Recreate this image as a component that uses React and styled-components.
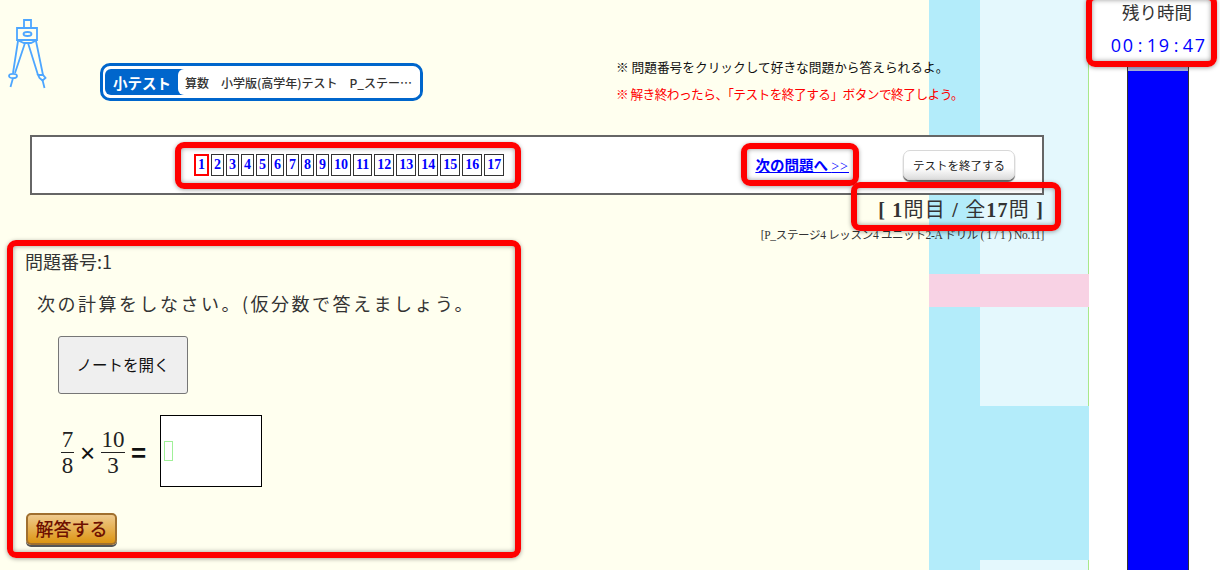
import React from "react";
import styled, { createGlobalStyle } from "styled-components";

const GOTHIC = `"Noto Sans CJK JP", "Liberation Sans", sans-serif`;
const SERIF = `"Liberation Serif", "Noto Sans CJK JP", serif`;

const Global = createGlobalStyle`
  html, body { margin: 0; padding: 0; background: #fff; }
`;

const Page = styled.div`
  display: grid;
  grid-template-columns: 1089px 131px;
  width: 1220px;
  height: 570px;
  overflow: hidden;
  position: relative;
`;

// 背景の帯は全部グラデーションで描く
const Main = styled.main`
  height: 570px;
  background-color: #ffffef;
  background-image:
    linear-gradient(#f8d2e4, #f8d2e4),
    linear-gradient(#b3ecfa, #b3ecfa),
    linear-gradient(#b3ecfa, #b3ecfa),
    linear-gradient(#a8e88a, #a8e88a),
    linear-gradient(#e4f8fd, #e4f8fd);
  background-repeat: no-repeat;
  background-size: 160px 33px, 51px 570px, 109px 154px, 1px 570px, 109px 570px;
  background-position: 929px 274px, 929px 0, 980px 406px, 1088px 0, 980px 0;
`;

const Header = styled.header`
  display: flex;
  height: 135px;
`;

const Compass = styled.svg`
  width: 40px;
  height: 72px;
  margin: 18px 0 0 8px;
  flex: none;
`;

const Badge = styled.div`
  display: flex;
  align-items: stretch;
  width: 317px;
  height: 32px;
  margin: 63px 0 0 52px;
  border: 3px solid #0066cc;
  border-radius: 10px;
  background: #fff;
  overflow: hidden;
`;

const BadgeLabel = styled.div`
  display: flex;
  align-items: center;
  box-sizing: border-box;
  flex: none;
  width: 79px;
  margin: 3px 0 3px 2px;
  padding-left: 8px;
  border-radius: 6px 0 0 6px;
  background: #0066cc;
  color: #fff;
  font: 700 14.5px ${GOTHIC};
`;

const BadgeText = styled.div`
  display: flex;
  align-items: center;
  flex: 1;
  min-width: 0;
  margin: 3px 0 3px -6px;
  padding-left: 7px;
  border-radius: 6px 0 0 6px;
  background: #fff;
  white-space: nowrap;
  color: #333;
  font: 500 12px ${GOTHIC};
`;

const Notes = styled.div`
  margin: 58px 0 0 193px;
  white-space: nowrap;
`;

const Note = styled.p`
  margin: 0 0 9px;
  height: 18px;
  color: ${(p) => (p.$alert ? "#ff0000" : "#111")};
  letter-spacing: ${(p) => (p.$alert ? "-0.55px" : "0")};
  font: 400 12.7px/18px ${GOTHIC};
`;

const NavPanel = styled.nav`
  display: flex;
  align-items: center;
  box-sizing: border-box;
  width: 1014px;
  height: 60px;
  margin-left: 30px;
  padding: 0 27px 0 162px;
  border: 2px solid #666;
  background: #fff;
`;

const Numbers = styled.ol`
  display: flex;
  align-items: center;
  gap: 2px;
  margin: 0;
  padding: 0;
  list-style: none;
`;

const NumberBox = styled.li`
  box-sizing: border-box;
  min-width: 13px;
  height: 22px;
  padding: 0 ${(p) => (p.$current || p.$wide ? 2 : 1)}px;
  border: ${(p) => (p.$current ? "2px solid #f00" : "1px solid #333")};
  background: #fff;
  color: #0000ff;
  text-align: center;
  font: 700 14px/20px ${SERIF};
  line-height: ${(p) => (p.$current ? 18 : 20)}px;
`;

const NextLink = styled.a`
  margin: -2px 0 0 auto;
  color: #0000ff;
  text-decoration: underline;
  white-space: nowrap;
  font: 700 14.5px ${GOTHIC};

  span {
    font: 400 14px ${SERIF};
    letter-spacing: 1px;
  }
`;

const FinishButton = styled.button`
  width: 112px;
  height: 30px;
  margin: -1px 0 0 54px;
  padding: 0;
  border: 1px solid #d8d8d8;
  border-radius: 7px;
  background: linear-gradient(#fff 60%, #ddd);
  box-shadow: 0 2px 1px #666;
  color: #222;
  font: 400 11.5px ${GOTHIC};
`;

const Progress = styled.div`
  width: 1044px;
  margin-top: 1px;
  height: 28px;
  text-align: right;
  color: #333;
  letter-spacing: 1.2px;
  white-space: pre;
  font: 700 20px/28px ${SERIF};

  span {
    font-weight: 400;
  }
`;

const Source = styled.div`
  width: 1044px;
  margin-top: 3px;
  height: 16px;
  text-align: right;
  color: #333;
  white-space: nowrap;
  letter-spacing: -0.32px;
  font: 400 11.5px/16px ${SERIF};
`;

const Question = styled.section`
  padding: 6px 0 0 25px;
`;

const QuestionNo = styled.div`
  height: 24px;
  color: #333;
  font: 400 18px/24px ${GOTHIC};
`;

const QuestionText = styled.p`
  margin: 16px 0 0 12px;
  height: 28px;
  color: #333;
  letter-spacing: 2.5px;
  white-space: nowrap;
  font: 400 18px/28px ${GOTHIC};
`;

const NoteButton = styled.button`
  display: block;
  width: 130px;
  height: 58px;
  margin: 19px 0 0 33px;
  padding: 0 0 2px;
  border: 1px solid #767676;
  border-radius: 3px;
  background: #efefef;
  color: #111;
  font: 400 15.5px ${GOTHIC};
`;

const Formula = styled.div`
  display: flex;
  align-items: center;
  height: 72px;
  margin: 21px 0 0 36px;
  color: #222;
`;

const Fraction = styled.span`
  display: inline-flex;
  flex-direction: column;
  align-items: center;
  min-width: ${(p) => p.$w}px;
  margin-top: 1px;
  font: 400 23px/25px ${SERIF};

  b {
    box-sizing: border-box;
    align-self: stretch;
    height: 26px;
    border-bottom: 1px solid #222;
    text-align: center;
    font-weight: 400;
  }

  i {
    height: 23px;
    font-style: normal;
  }
`;

const Operator = styled.span`
  width: ${(p) => p.$w}px;
  margin-top: 3px;
  text-align: center;
  color: #111;
  font: ${(p) => p.$weight} ${(p) => p.$size}px/1 "Liberation Sans", sans-serif;
`;

const AnswerBox = styled.div`
  display: flex;
  align-items: center;
  box-sizing: border-box;
  width: 102px;
  height: 72px;
  margin-left: 8px;
  padding-left: 3px;
  border: 1px solid #000;
  background: #fff;
`;

const Caret = styled.span`
  box-sizing: border-box;
  width: 9px;
  height: 20px;
  border: 1px solid #a0f098;
`;

const AnswerButton = styled.button`
  display: block;
  box-sizing: border-box;
  width: 91px;
  height: 32px;
  margin: 26px 0 0 1px;
  padding: 0 0 2px;
  border: 2px solid #a0702f;
  border-radius: 5px;
  background: linear-gradient(#efca8e, #dd9512);
  box-shadow: 0 2px 0 #555;
  color: #6e1000;
  font: 500 18px ${GOTHIC};
`;

const Side = styled.aside`
  display: flex;
  flex-direction: column;
  align-items: center;
  height: 570px;
  background: #fff;
`;

const TimeLabel = styled.div`
  margin: 0 0 0 5px;
  height: 24px;
  color: #333;
  font: 400 17.5px/24px ${GOTHIC};
`;

const Clock = styled.div`
  display: flex;
  margin: 10px 0 0 7px;
  height: 23px;
  color: #0000ff;
  font: 500 18px/23px "Open Sans", sans-serif;
`;

const ClockChar = styled.span`
  width: 12px;
  text-align: center;
`;

const Gauge = styled.div`
  box-sizing: border-box;
  width: 62px;
  flex: 1;
  margin: 9px 0 0 7px;
  padding-top: 5px;
  border: solid #333;
  border-width: 0 1px;
  background: #aab4dc;
`;

const GaugeFill = styled.div`
  height: 100%;
  background: #0000ff;
`;

// 赤枠は画面の上に重ねた注釈
const Mark = styled.div`
  position: absolute;
  box-sizing: border-box;
  left: ${(p) => p.$x}px;
  top: ${(p) => p.$y}px;
  width: ${(p) => p.$w}px;
  height: ${(p) => p.$h}px;
  border: 6px solid #ff0000;
  border-radius: 9px;
  box-shadow: 0 1px 4px rgba(0, 0, 0, 0.35), inset 0 0 5px rgba(0, 0, 0, 0.4);
  pointer-events: none;
`;

const numbers = Array.from({ length: 17 }, (_, i) => i + 1);

const marks = [
  { x: 1086, y: -6, w: 131, h: 73 },
  { x: 175, y: 142, w: 346, h: 47 },
  { x: 741, y: 143, w: 118, h: 43 },
  { x: 851, y: 182, w: 210, h: 49 },
  { x: 7, y: 240, w: 514, h: 318 },
];

const CompassIcon = () => (
  <Compass viewBox="0 0 40 72" fill="none" stroke="#4da6ff" strokeWidth="1.8">
    <path d="M16 2h7v8h-7z" />
    <path d="M9 10h20v12h-20z" />
    <ellipse cx="19.500" cy="16" rx="4" ry="2" />
    <path d="M9 22l7 3h7l6-3" />
    <path d="M10 23L5 55M17 25L7 55" />
    <path d="M20 25l10 32M28 23l7 34" />
    <ellipse cx="5" cy="58" rx="4" ry="2.200" />
    <path d="M5 60L2.500 69" />
    <path d="M30 57h5l2.500 3-3 2.500-3-2.500z" />
    <path d="M34.500 62l2 8" />
  </Compass>
);

export default function App() {
  return (
    <>
      <Global />
      <Page>
        <Main>
          <Header>
            <CompassIcon />
            <Badge>
              <BadgeLabel>小テスト</BadgeLabel>
              <BadgeText>算数　小学版(高学年)テスト　P_ステー…</BadgeText>
            </Badge>
            <Notes>
              <Note>※ 問題番号をクリックして好きな問題から答えられるよ。</Note>
              <Note $alert>※ 解き終わったら、「テストを終了する」ボタンで終了しよう。</Note>
            </Notes>
          </Header>
          <NavPanel>
            <Numbers>
              {numbers.map((n) => (
                <NumberBox key={n} $current={n === 1} $wide={n >= 10}>
                  {n}
                </NumberBox>
              ))}
            </Numbers>
            <NextLink href="#">
              次の問題へ <span>&gt;&gt;</span>
            </NextLink>
            <FinishButton>テストを終了する</FinishButton>
          </NavPanel>
          <Progress>
            [ 1<span>問目</span> / <span>全</span>17<span>問</span> ]
          </Progress>
          <Source>[P_ステージ4 レッスン4 ユニット2-A ドリル ( 1 / 1 ) No.11]</Source>
          <Question>
            <QuestionNo>問題番号:1</QuestionNo>
            <QuestionText>次の計算をしなさい。(仮分数で答えましょう。</QuestionText>
            <NoteButton>ノートを開く</NoteButton>
            <Formula>
              <Fraction $w={13}>
                <b>7</b>
                <i>8</i>
              </Fraction>
              <Operator $w={27} $size={26} $weight={400}>
                ×
              </Operator>
              <Fraction $w={24}>
                <b>10</b>
                <i>3</i>
              </Fraction>
              <Operator $w={27} $size={26} $weight={700}>
                =
              </Operator>
              <AnswerBox>
                <Caret />
              </AnswerBox>
            </Formula>
            <AnswerButton>解答する</AnswerButton>
          </Question>
        </Main>
        <Side>
          <TimeLabel>残り時間</TimeLabel>
          <Clock>
            {"00:19:47".split("").map((c, i) => (
              <ClockChar key={i}>{c}</ClockChar>
            ))}
          </Clock>
          <Gauge>
            <GaugeFill />
          </Gauge>
        </Side>
        {marks.map((m) => (
          <Mark key={m.x} $x={m.x} $y={m.y} $w={m.w} $h={m.h} />
        ))}
      </Page>
    </>
  );
}
